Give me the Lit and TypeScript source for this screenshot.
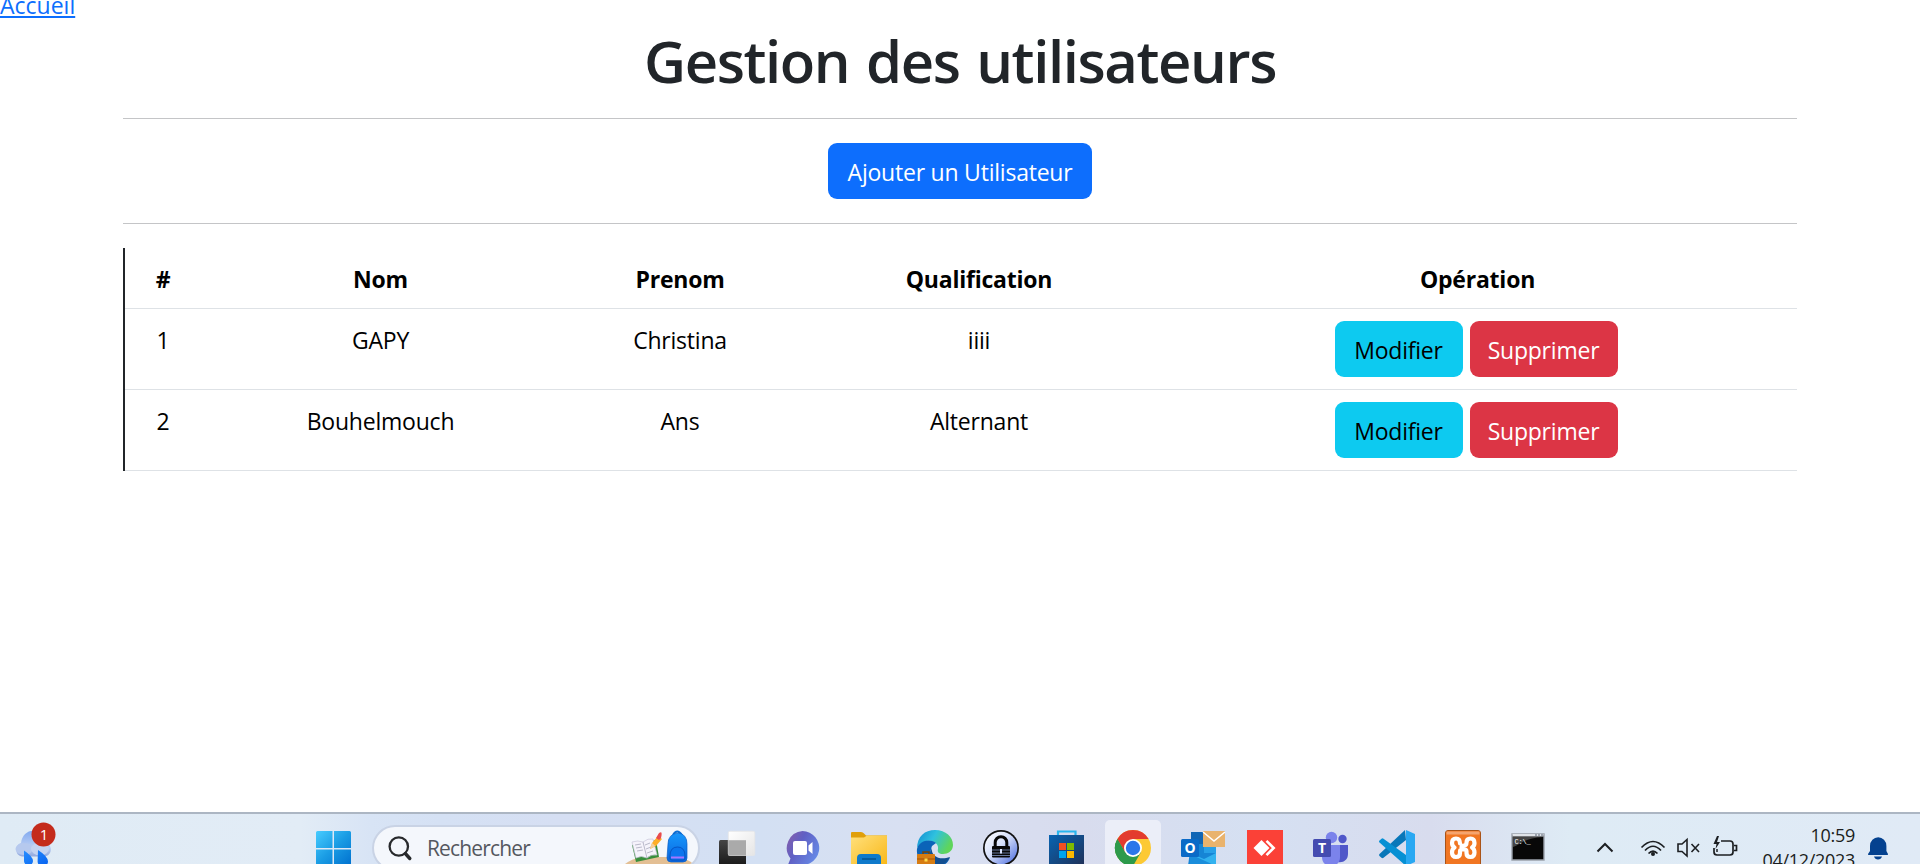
import { LitElement, html, svg, css } from "lit";
import { customElement, state } from "lit/decorators.js";

interface Utilisateur {
  nom: string;
  prenom: string;
  qualification: string;
}

@customElement("user-table")
class UserTable extends LitElement {
  static styles = css`
    :host { display: block; }
    .table {
      display: grid;
      grid-template-columns: 76px 359px 240px 358px 639px;
      border-left: 2px solid #212529;
      text-align: center;
      line-height: 36px;
      color: #000;
    }
    .cell { border-bottom: 1px solid #dee2e6; padding: 13px 12px 11px; }
    .head { font-weight: 700; }
    .ops { display: flex; justify-content: center; gap: 7px; padding: 12px 15px 12px 12px; }
    .btn { border-radius: 9px; height: 56px; box-sizing: border-box; padding-top: 11px; }
    .info { background: #0dcaf0; color: #000; width: 128px; }
    .danger { background: #dc3545; color: #fff; width: 148px; }
  `;

  @state() private users: Utilisateur[] = [
    { nom: "GAPY", prenom: "Christina", qualification: "iiii" },
    { nom: "Bouhelmouch", prenom: "Ans", qualification: "Alternant" },
  ];

  render() {
    return html`<div class="table">
      ${["#", "Nom", "Prenom", "Qualification", "Opération"].map((t) => html`<div class="cell head">${t}</div>`)}
      ${this.users.map(
        (u, i) => html`
          <div class="cell">${i + 1}</div>
          <div class="cell">${u.nom}</div>
          <div class="cell">${u.prenom}</div>
          <div class="cell">${u.qualification}</div>
          <div class="cell ops"><div class="btn info">Modifier</div><div class="btn danger">Supprimer</div></div>
        `
      )}
    </div>`;
  }
}

// Each application icon is drawn in a 66 x 50 cell, centred near (34, 34).
const apps = [
  // Task view
  svg`<rect x="16" y="26" width="27" height="26" rx="1.500" fill="url(#dark)"/><rect x="25.300" y="17.300" width="26.500" height="24.200" rx="1.500" fill="url(#pale)" stroke="#e6e6e6" stroke-width=".8"/><path d="M25.300 26.200h17.700v15.300h-17.700z" fill="#aaa"/>`,
  // Chat
  svg`<path d="M33.500 17a17 17 0 1 1-6 33l-9 2 3-7.500A17 17 0 0 1 33.500 17z" fill="url(#chat)"/><rect x="24" y="27" width="14" height="14" rx="2" fill="#fff"/><path d="M39.500 31.500l4-3.500v12l-4-3.500z" fill="#fff"/>`,
  // File explorer
  svg`<path d="M16 19q0-1 1-1h9q2 0 3 1.500l2 2H52V30H16z" fill="#e09f0a"/><path d="M16 23.500h13l3-2h20V52H16z" fill="url(#folder)"/><path d="M22 52V44q0-4 4-4h16q4 0 4 4v8z" fill="#0f7acb"/><path d="M27 45h14" stroke="#075da0" stroke-width="2"/>`,
  // Edge
  svg`<path d="M16 35C16 22 24 16 34 16c11 0 18 7 18 15 0 6-5 9-10 9-4 0-6-2-5-5 1-5-5-9-11-8-5 1-10 5-10 8z" fill="url(#edge)"/><path d="M16 35c2-8 12-11 19-6l-4 3c-3 5 0 14 7 16 4 1 8 0 11-5-2 8-10 11-18 9C21 51 15 44 16 35z" fill="#0b63b8"/><path d="M31 32c-2 9 6 15 18 11-3 6-8 9-14 9l-7-7z" fill="#124f91"/><rect x="16" y="40" width="18" height="12" rx="1" fill="#d77c12"/><path d="M22 40v-2h6v2" fill="none" stroke="#794407" stroke-width="1.500"/><path d="M16 45h18" stroke="#a3530a"/><rect x="23.500" y="44.500" width="3" height="3" fill="#ffd94a"/>`,
  // KeePass
  svg`<circle cx="34" cy="34" r="18" fill="#111"/><circle cx="34" cy="34" r="16.300" fill="url(#lock)"/><path d="M28.200 33v-4.500a5.800 5.800 0 0 1 11.600 0V33" fill="none" stroke="#080808" stroke-width="3"/><rect x="25" y="32" width="18" height="11.500" rx="1" fill="#080808"/><path d="M25 36h18M25 39h18M25 41.500h18" stroke="#8ea6dc" stroke-width=".7"/><path d="M34 35v4.500" stroke="#dbe5ff" stroke-width="2"/>`,
  // Microsoft Store
  svg`<path d="M25 23v-5.500h17.500V23" fill="none" stroke="#29b6ee" stroke-width="2.200"/><path d="M16 21h35v31H16z" fill="url(#store)"/><path d="M26 29h7v7h-7z" fill="#f25022"/><path d="M34 29h7v7h-7z" fill="#7fba00"/><path d="M26 37h7v7h-7z" fill="#00a4ef"/><path d="M34 37h7v7h-7z" fill="#ffb900"/>`,
  // Chrome, active window
  svg`<rect x="6" y="6" width="56" height="60" rx="5" fill="#edf0f8" fill-opacity=".9"/><circle cx="34" cy="34" r="18" fill="#fcc934"/><path d="M18.400 25A18 18 0 0 0 34 52l7.800-13.500L34 34 26.200 38.500z" fill="#2d9a4b"/><path d="M18.400 25A18 18 0 0 1 49.600 25H34l-7.800 13.500z" fill="#e33b2e"/><path d="M18.400 25l7.800 13.500L34 52a18 18 0 0 1-15.600-27z" fill="#2d9a4b"/><circle cx="34" cy="34" r="9" fill="#fff"/><circle cx="34" cy="34" r="7.200" fill="#2a76ea"/>`,
  // Outlook
  svg`<path d="M26 18h20v20H26z" fill="#1066b5"/><path d="M26 30h25v22H23z" fill="#1685d5"/><path d="M39 25h12v14H39z" fill="#27a0e8"/><path d="M25 39l14 6 12-6v13H25z" fill="#32b2ef"/><path d="M25 40l26 12H25z" fill="#1a8ddb"/><rect x="16" y="25" width="18" height="18" rx="1.500" fill="#0a6ac7"/><text class="glyph" x="25" y="39">O</text><path d="M38 17h22v16H38z" fill="#e9b36d"/><path d="M38 18l11 9 11-9" fill="none" stroke="#fff" stroke-width="1.500"/>`,
  // AnyDesk
  svg`<path d="M16 16h36v36H16z" fill="#fb4137"/><path d="M22.500 34l8-8 8 8-8 8z" fill="#fff"/><path d="M35.500 26.800l7.200 7.200-7.200 7.200" fill="none" stroke="#fff" stroke-width="2.600"/>`,
  // Teams
  svg`<circle cx="45.500" cy="25" r="4.200" fill="#4f57c9"/><path d="M41 31h10v9c0 6-5 9-10 8z" fill="#4f57c9"/><circle cx="34.500" cy="23.500" r="5.700" fill="#7b83eb"/><path d="M26 31h17v12c0 6-4 9-9 9s-9-3-9-9z" fill="#7b83eb"/><rect x="16" y="25" width="18" height="18" rx="1.500" fill="#444bb0"/><text class="glyph" x="25" y="39">T</text>`,
  // VS Code
  svg`<path d="M42 16L16.500 40q-1 1 0 2l2 1.800q1 .8 2 0L43 26z" fill="#0877b9"/><path d="M43 52L16.500 28.500q-1-1 0-2l2-1.800q1-.8 2 0L43 41z" fill="#0690d4"/><path d="M43 16l9 4v28l-9 4z" fill="#29a8f2"/>`,
  // XAMPP
  svg`<rect x="16.500" y="16.500" width="35" height="36" rx="2.500" fill="#f17622" stroke="#a95317"/><path d="M17.500 17.500h33v3h-33z" fill="#f5a46e"/><path d="M31 29.500q0-5-4-5t-4 4.500q0 3 2.500 4.500-2.500 1.500-2.500 5 0 4.500 4 4.500t4-4v-1.500q0-2 2-2h2.500q2 0 2 2v1.500q0 4 4 4t4-4.500q0-3.500-2.500-5 2.500-1.500 2.500-4.500 0-4.500-4-4.500t-4 4q0 3-2.500 3t-2.500 2" fill="none" stroke="#fff" stroke-width="4.200" stroke-linejoin="round" stroke-linecap="round"/>`,
  // Command prompt
  svg`<path d="M17 20h32v26H17z" fill="#080808" stroke="#9aa1ab" stroke-width="1.400"/><path d="M17.500 20h31v2.500h-31z" fill="#dfe3e8"/><path d="M40 21h2m1 0h2m1 0h2" stroke="#586576"/><path d="M18 23h30q-15 1-22 6-5 3-8 4z" fill="#444"/><text class="prompt" x="19.500" y="30">C:\\_</text>`,
];

@customElement("task-bar")
class TaskBar extends LitElement {
  static styles = css`
    :host {
      display: flex;
      height: 50px;
      border-top: 2px solid #acb6c3;
      background: linear-gradient(90deg, #dfebf5 0, #e2ecf6 300px, #d8e4f5 370px, #d5e1f4 440px, #d6dff3 560px, #d3e0f3 760px, #d8e0f2 900px, #d8dcee 1080px, #d5e0f2 1260px, #d8dcee 1430px, #deebf5 1570px, #e0eaf6 1920px);
    }
    svg { display: block; flex: none; }
    .start { margin-left: 251px; }
    .search {
      margin: 11px 3px 0 7px;
      width: 328px;
      height: 46px;
      box-sizing: border-box;
      border: 2px solid #c9d3e5;
      border-radius: 23px;
      background: #f4f7fc;
      display: flex;
      overflow: hidden;
      flex: none;
    }
    .placeholder { width: 130px; margin-left: 1px; font-size: 21px; line-height: 42px; letter-spacing: -0.85px; color: #55585f; }
    .art { margin-left: auto; }
    .badge { font: 15px "Open Sans", sans-serif; fill: #fff; text-anchor: middle; }
    .glyph { font: 700 14px "Open Sans", sans-serif; fill: #fff; text-anchor: middle; }
    .prompt { font: 7px "Liberation Mono", monospace; fill: #fff; }
    .tray { margin-left: 18px; }
    .clock { width: 106px; padding-top: 9px; text-align: right; font-size: 18px; line-height: 24.500px; letter-spacing: -0.3px; color: #1b1d20; }
    .bell { margin-left: 12px; }
  `;

  render() {
    return html`
      <svg width="65" height="50" viewBox="0 0 65 50">
        <defs>
          <linearGradient id="cloud" x2="0" y2="1"><stop stop-color="#82aaf0"/><stop offset=".65" stop-color="#bdd0f3"/><stop offset="1" stop-color="#91a7dd"/></linearGradient>
          <linearGradient id="drop" x2="1" y2="1"><stop stop-color="#278eff"/><stop offset="1" stop-color="#0560ef"/></linearGradient>
        </defs>
        <path d="M22 42.500a7 7 0 0 1-1-13.500c1-8 7-13 14-12 6 1 9 5 10 11 8 2 8 14-1 14.500z" fill="url(#cloud)"/>
        <ellipse cx="24" cy="35" rx="8.500" ry="6" fill="#b6c9ee"/><ellipse cx="40" cy="35" rx="9" ry="6.500" fill="#c4d3f1"/>
        <path d="M24 36.500q9 6 9 10.500a4.500 4.500 0 0 1-9 0zM38 36q10 6.500 10 11.500a5.200 5.200 0 0 1-10.400 0z" fill="url(#drop)"/>
        <circle cx="43.500" cy="20.500" r="12" fill="#c42b1c"/><text class="badge" x="44" y="26">1</text>
      </svg>
      <svg class="start" width="49" height="50" viewBox="316 0 49 50">
        <defs><linearGradient id="win" gradientUnits="userSpaceOnUse" x1="316" y1="17" x2="350" y2="52"><stop stop-color="#47ccff"/><stop offset=".5" stop-color="#1a9ce4"/><stop offset="1" stop-color="#0071cf"/></linearGradient></defs>
        <path d="M317.500 17H332.500V34H316V18.500Q316 17 317.500 17zM334 17h15.500q1.500 0 1.500 1.500V34h-17zM316 35.500h16.500V52H316zM334 35.500h17V52h-17z" fill="url(#win)"/>
      </svg>
      <div class="search">
        <svg width="52" height="42" viewBox="374 13 52 42"><circle cx="398.800" cy="32.500" r="9.200" fill="none" stroke="#282a2d" stroke-width="2.300"/><path d="M405.300 39.500l4.500 5" stroke="#282a2d" stroke-width="3.400" stroke-linecap="round"/></svg>
        <span class="placeholder">Rechercher</span>
        <svg class="art" width="80" height="42" viewBox="618 13 80 42">
          <defs><linearGradient id="bag" x2="0" y2="1"><stop stop-color="#1697fb"/><stop offset="1" stop-color="#0a65df"/></linearGradient></defs>
          <path d="M625 50q6-5 17-7h36q12 3 15 7l-8 6h-50z" fill="#e3bf94"/>
          <path d="M632 31l24-5 3 17-23 5z" fill="#398f3c"/><path d="M632 28q6-2 11 0 5-4 10-3l4 16q-6-1-10 3-6-3-11 0z" fill="#f5f3fb" stroke="#c9c6d8" stroke-width=".7"/><path d="M643 28l4 16M635 31l6-1m-5 4l6-1m-5 4l6-1m2-5l5-2m-4 6l5-2m-4 6l6-2" stroke="#aaaabd" stroke-width=".8"/>
          <path d="M650 35l2-6 6-7 4 3-6 7z" fill="#ffae27"/><path d="M650 35l2-6 3.500 3z" fill="#f4cf9d"/><path d="M656 24l3-5q4-3 2 5l-2 2z" fill="#e94c4c"/>
          <path d="M673 21q4-7 9 0" fill="none" stroke="#0b6dd2" stroke-width="2"/><path d="M668 30q0-10 10-11 9 1 9 11v14q0 4-4 4h-12q-4 0-4-4z" fill="url(#bag)" stroke="#0a5ec5" stroke-width=".7"/><path d="M670 42q0-9 7.500-9t7.500 9v2q0 2-2 2h-11q-2 0-2-2z" fill="#0b75ee" stroke="#064eb9" stroke-width=".8"/><path d="M671 43.500h13" stroke="#a575ff" stroke-width="2"/>
        </svg>
      </div>
      ${apps.map(
        (icon) => html`<svg width="66" height="50" viewBox="0 0 66 50">
          <defs>
            <linearGradient id="dark" x2="0" y2="1"><stop stop-color="#454545"/><stop offset="1" stop-color="#181818"/></linearGradient>
            <linearGradient id="pale" x2="1" y2="1"><stop stop-color="#fff"/><stop offset="1" stop-color="#e5e5e5"/></linearGradient>
            <linearGradient id="chat" x2="1" y2=".6"><stop stop-color="#8a5fa8"/><stop offset=".45" stop-color="#6060c4"/><stop offset="1" stop-color="#6688e5"/></linearGradient>
            <linearGradient id="folder" x2="1" y2="1"><stop stop-color="#ffe07c"/><stop offset="1" stop-color="#f9b716"/></linearGradient>
            <linearGradient id="edge" x2="1" y2=".4"><stop stop-color="#128bd1"/><stop offset=".5" stop-color="#2fc1df"/><stop offset="1" stop-color="#5fd55b"/></linearGradient>
            <linearGradient id="lock" x2="1" y2="1"><stop stop-color="#fff"/><stop offset=".45" stop-color="#d6e0fa"/><stop offset="1" stop-color="#4465dd"/></linearGradient>
            <linearGradient id="store" x2="1" y2="1"><stop stop-color="#0864b2"/><stop offset="1" stop-color="#203057"/></linearGradient>
          </defs>
          ${icon}
        </svg>`
      )}
      <svg class="tray" width="170" height="50" viewBox="1579 0 170 50" fill="none" stroke="#1c1f22" stroke-width="2">
        <path d="M1597.500 37.500l7.500-7.500 7.500 7.500"/>
        <path d="M1641.500 33.500q11.500-12 23 0M1645 36.500q8-8.500 16 0M1648.500 39.500q4.500-4.500 9 0" stroke-width="1.700"/><circle cx="1653" cy="40" r="2" fill="#1c1f22" stroke="none"/>
        <path d="M1678 30h4l5-4.500v16.500l-5-4.500h-4zM1691.500 30l7.500 8m0-8l-7.500 8" stroke-width="1.600"/>
        <path d="M1721 27h9q3 0 3 3v8q0 3-3 3h-13q-3 0-3-3v-4M1734 31.500h2.500v5h-2.500" stroke-width="1.700"/><path d="M1717 22l-3.500 8h3l-1 5 4.500-7h-3l2-6z" fill="#1c1f22" stroke="none"/><path d="M1717 35v3" stroke-width="1.500"/>
      </svg>
      <div class="clock">10:59<br />04/12/2023</div>
      <svg class="bell" width="22" height="50" viewBox="1867 0 22 50"><path d="M1870 32a8.200 8.800 0 0 1 16.400 0v5l1.600 3q.5 1-1 1h-18q-1.500 0-1-1l2-3zM1874 42.500h8q-1 3-4 3t-4-3z" fill="#04418f"/></svg>
    `;
  }
}

@customElement("app-root")
class AppRoot extends LitElement {
  static styles = css`
    :host {
      display: flex;
      flex-direction: column;
      height: 864px;
      overflow: hidden;
      background: #fff;
      font-family: "Open Sans", "Noto Sans", sans-serif;
      font-size: 23px;
      letter-spacing: -0.22px;
      line-height: 36px;
      color: #212529;
    }
    .nav { margin-top: -13px; height: 36px; }
    .link { color: #0d6efd; text-decoration: underline; text-decoration-thickness: 2px; text-underline-offset: 2px; letter-spacing: 0; }
    .main { flex: 1; padding: 2px 123px 0; display: flex; flex-direction: column; }
    .title { margin: 0 0 21px; font-size: 58px; font-weight: 600; line-height: 72px; letter-spacing: -1.4px; word-spacing: 3px; text-align: center; }
    .rule { height: 1px; background: #c4c5c7; }
    .add { align-self: center; margin: 24px 0; width: 264px; height: 56px; box-sizing: border-box; padding-top: 11px; border-radius: 9px; background: #0d6efd; color: #fff; text-align: center; }
    .list { margin-top: 24px; }
  `;

  render() {
    return html`
      <div class="nav"><a class="link">Accueil</a></div>
      <div class="main">
        <h1 class="title">Gestion des utilisateurs</h1>
        <div class="rule"></div>
        <div class="add">Ajouter un Utilisateur</div>
        <div class="rule"></div>
        <user-table class="list"></user-table>
      </div>
      <task-bar></task-bar>
    `;
  }
}
